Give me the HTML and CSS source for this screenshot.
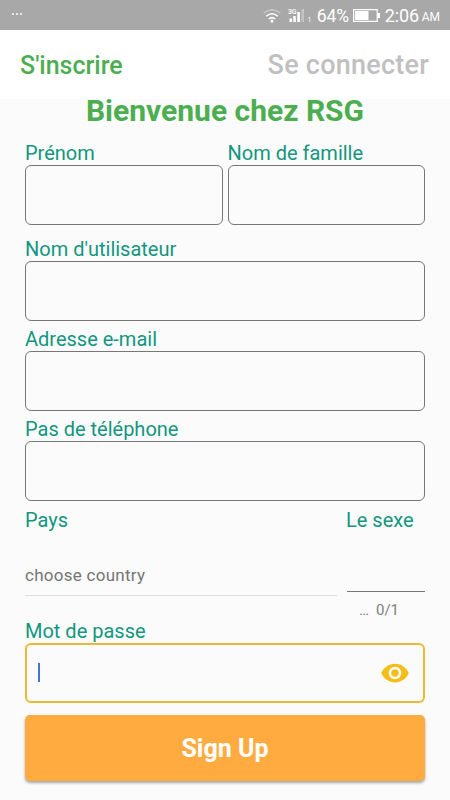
FILE: index.html
```html
<!DOCTYPE html>
<html lang="fr">
<head>
<meta charset="utf-8">
<meta name="viewport" content="width=device-width, initial-scale=1">
<title>S'inscrire</title>
<link rel="stylesheet" href="styles.css">
</head>
<body>
<header class="status">
  <span class="dots"><i></i><i></i><i></i></span>
  <div class="indicators">
    <svg class="wifi" width="18" height="14" viewBox="0 0 18 14" fill="none" stroke-width="1.5">
      <path d="M.7 4.3Q9-2.7 17.3 4.3" stroke="#c9c9c9"/>
      <path d="M3.2 7.3Q9 2.2 14.8 7.3M5.8 10Q9 7.2 12.2 10" stroke="#fff"/>
      <circle cx="9" cy="12" r="1.5" fill="#fff"/>
    </svg>
    <svg class="signal" width="24" height="15" viewBox="0 0 24 15" fill="#fff">
      <text x="0" y="5.8" class="net">3G</text>
      <path d="M1.5 10.5h2.5V14H1.5zM5.2 8h2.6v6H5.200zM9.300 4h2.600v10H9.300z"/>
      <path d="M13.5 1H16v13h-2.500z" fill="#c4c4c4"/>
      <text x="19.500" y="14" class="sim">1</text>
    </svg>
    <span class="percent">64%</span>
    <svg class="battery" width="27" height="13" viewBox="0 0 27 13">
      <path d="M.6.6h23.6v11.8H.6z" fill="none" stroke="#fff" stroke-width="1.2"/>
      <path d="M2 2h13.500v9H2zM24.500 4H27v5h-2.500z" fill="#fff"/>
    </svg>
    <span class="time">2:06</span><span class="ampm">AM</span>
  </div>
</header>
<nav class="tabs"><span class="tab active">S'inscrire</span><span class="tab">Se connecter</span></nav>
<main>
  <h1><span>Bienvenue chez RSG</span></h1>
  <form>
    <div class="names">
      <div class="field"><label>Prénom</label><div class="box"></div></div>
      <div class="field"><label>Nom de famille</label><div class="box"></div></div>
    </div>
    <div class="field"><label>Nom d'utilisateur</label><div class="box"></div></div>
    <div class="field"><label>Adresse e-mail</label><div class="box"></div></div>
    <div class="field"><label>Pas de téléphone</label><div class="box"></div></div>
    <div class="details">
      <div class="country"><label>Pays</label><div class="select">choose country</div></div>
      <div class="sex"><label>Le sexe</label><div class="line"></div><div class="counter"><span>…</span><span>0/1</span></div></div>
    </div>
    <div class="field password"><label>Mot de passe</label>
      <div class="box focused"><span class="caret"></span>
        <svg width="30" height="30" viewBox="0 0 24 24" fill="#f5bd18"><path d="M12 4.500C7 4.500 2.730 7.610 1 12c1.730 4.390 6 7.500 11 7.500s9.270-3.110 11-7.500c-1.730-4.390-6-7.500-11-7.500zM12 17c-2.760 0-5-2.240-5-5s2.240-5 5-5 5 2.240 5 5-2.240 5-5 5zm0-8c-1.660 0-3 1.340-3 3s1.340 3 3 3 3-1.340 3-3-1.340-3-3-3z"/></svg>
      </div>
    </div>
    <button type="button">Sign Up</button>
  </form>
</main>
</body>
</html>
```
FILE: styles.css
```css
* { box-sizing: border-box; }
body { margin: 0; height: 800px; overflow: hidden; background: #fbfbfb; font-family: Roboto, sans-serif; }
.status { height: 30px; background: #a8a8a8; display: flex; justify-content: space-between; padding: 0 10px 0 12px; color: #fff; }
.dots { display: flex; gap: 2px; padding-top: 13px; }
.dots i { width: 2px; height: 2px; background: #e8e8e8; }
.indicators { display: flex; align-items: flex-start; line-height: 30px; white-space: nowrap; }
.wifi { margin: 9px 7px 0 0; }
.signal { margin: 8px 5px 0 0; }
.net { font-size: 7px; font-weight: 500; letter-spacing: -.3px; }
.sim { font-size: 7px; }
.percent { font-size: 17.5px; width: 33px; margin-top: 1px; letter-spacing: -.1px; }
.battery { margin: 9px 5px 0 3px; }
.time { font-size: 18px; width: 35px; margin-top: 1px; letter-spacing: -.1px; }
.ampm { font-size: 12px; margin: 2px 0 0 2px; }
.tabs { height: 69px; background: #fff; display: flex; justify-content: space-between; align-items: flex-start; padding: 20px 21px 0 20px; }
.tab { font-size: 27px; line-height: 30px; font-weight: 500; color: #c0c0c0; letter-spacing: .24px; }
.tab.active { font-size: 25px; line-height: 32px; color: #4cae50; letter-spacing: 0; }
h1 { margin: 0; height: 42px; font-size: 30px; line-height: 24px; font-weight: 700; color: #4cae50; text-align: center; }
form { padding: 0 25px; }
label { display: block; height: 24px; font-size: 20px; line-height: 24px; color: #12967f; white-space: nowrap; }
.names { display: grid; grid-template-columns: 1fr 1fr; gap: 5px; margin-bottom: 6px; }
.field { margin-bottom: 6px; }
.box { height: 60px; border: 1px solid #777; border-radius: 6px; }
.details { display: grid; grid-template-columns: 312px 78px; gap: 10px; height: 111px; }
.details label { padding-top: 1px; }
.sex label { margin-left: -1px; }
.select { height: 65px; padding-top: 34px; font-size: 17px; line-height: 20px; letter-spacing: .27px; color: #757575; border-bottom: 1px solid #ddd; }
.line { height: 61px; border-bottom: 1px solid #777; }
.counter { display: flex; justify-content: center; gap: 7px; margin-top: 9px; font-size: 15px; line-height: 18px; color: #808080; padding-right: 14px; }
.password { margin-bottom: 12px; }
.password label { height: 25px; padding-top: 1px; }
.box.focused { border: 2px solid #e9bb32; display: flex; align-items: center; justify-content: space-between; padding: 0 13px 0 11px; }
.caret { width: 2px; height: 19px; background: #4674ce; margin-bottom: 2px; }
button { display: block; width: 100%; height: 66px; border: 0; border-radius: 5px; background: #ffab40; color: #fff; font: 700 25px/68px Roboto, sans-serif; padding: 0; box-shadow: 0 2px 3px rgba(0,0,0,.35); }
```
